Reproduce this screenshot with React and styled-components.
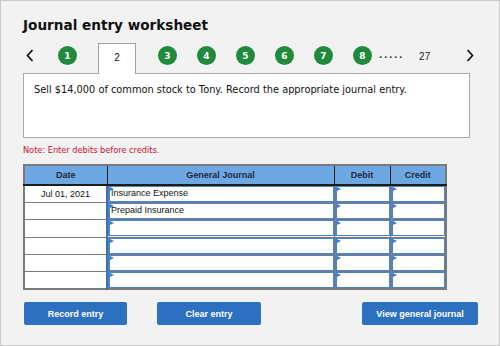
import React from 'react';
import styled, { createGlobalStyle } from 'styled-components';

const GlobalStyle = createGlobalStyle`
  html, body {
    margin: 0;
    padding: 0;
    background: #ffffff;
  }
`;

const Frame = styled.div`
  box-sizing: border-box;
  width: 500px;
  height: 346px;
  background: #f2f2f2;
  border: 1px solid #c9c9c9;
  padding: 14px 0 0 22px;
  font-family: 'DejaVu Sans', Verdana, sans-serif;
`;

const Title = styled.h1`
  margin: 0;
  font-size: 13.6px;
  line-height: 20px;
  font-weight: bold;
  color: #111;
`;

const TabRow = styled.div`
  display: flex;
  align-items: flex-start;
  height: 30px;
  margin-top: 8px;
  position: relative;
  z-index: 1;
`;

const Chevron = styled.svg`
  width: 8px;
  height: 13px;
  margin-left: ${(p) => p.$ml || 0}px;
  margin-top: 6px;
  flex-shrink: 0;
`;

const Step = styled.span`
  display: flex;
  align-items: center;
  justify-content: center;
  width: 19px;
  height: 19px;
  border-radius: 50%;
  background: #1f8a3c;
  color: #fff;
  font-size: 9px;
  font-weight: bold;
  margin-left: ${(p) => p.$ml}px;
  margin-top: 3px;
  flex-shrink: 0;
`;

const ActiveTab = styled.span`
  box-sizing: border-box;
  width: 38px;
  height: 31px;
  margin-left: ${(p) => p.$ml}px;
  background: #fff;
  border: 1px solid #a0a0a0;
  border-bottom: none;
  display: flex;
  justify-content: center;
  padding-top: 8px;
  font-family: 'Liberation Sans', Arial, sans-serif;
  font-size: 10px;
  color: #111;
`;

const Dots = styled.span`
  margin-left: 7px;
  margin-top: 7px;
  font-size: 9px;
  letter-spacing: 1.6px;
  font-weight: bold;
  color: #333;
`;

const Last = styled.span`
  margin-left: 15px;
  margin-top: 8px;
  font-family: 'Liberation Sans', Arial, sans-serif;
  font-size: 10px;
  color: #222;
`;

const Question = styled.div`
  box-sizing: border-box;
  width: 447px;
  height: 65px;
  background: #fff;
  border: 1px solid #ababab;
  padding: 10px 10px;
  font-size: 9.8px;
  color: #111;
`;

const Note = styled.p`
  margin: 7px 0 0 0;
  font-size: 8.2px;
  color: #c8102e;
`;

const Table = styled.table`
  margin-top: 9px;
  border-collapse: collapse;
  border: 2px solid #7a7a7a;
  font-family: 'Liberation Sans', Arial, sans-serif;
  font-size: 9px;
  table-layout: fixed;
  width: 422px;
`;

const Col = styled.col`
  width: ${(p) => p.$w}px;
`;

const Head = styled.th`
  background: #6ea8e3;
  height: 18px;
  padding: 0;
  font-weight: bold;
  color: #1b2a3c;
  border-left: 1px solid #1c1c1c;
  border-bottom: 2px solid #1c1c1c;
  &:first-child {
    border-left: none;
  }
`;

const Row = styled.tr`
  height: 17.3px;
`;

const DateCell = styled.td`
  background: #fff;
  text-align: center;
  padding: 0;
  border: 1px solid #7a7a7a;
  color: #111;
`;

const InputCell = styled.td`
  padding: 0;
  border: 1px solid #7a7a7a;
  border-left: ${(p) => (p.$wide ? 2 : 1)}px solid #3d6fa8;
`;

const Field = styled.div`
  position: relative;
  box-sizing: border-box;
  height: 16px;
  background: #fff;
  border: 1.5px solid #4a85cb;
  border-left-width: 2px;
  padding-left: 1px;
  line-height: 13px;
  color: #111;
  white-space: nowrap;
  overflow: hidden;
`;

const Marker = styled.span`
  position: absolute;
  left: 0;
  top: 0;
  width: 0;
  height: 0;
  border-top: 2px solid transparent;
  border-bottom: 2px solid transparent;
  border-left: 4px solid #3a7bd0;
`;

const Buttons = styled.div`
  display: flex;
  margin-top: 12px;
  margin-left: 1px;
`;

const Button = styled.button`
  box-sizing: border-box;
  width: ${(p) => p.$w}px;
  height: 23px;
  margin-left: ${(p) => p.$ml || 0}px;
  background: #2e70c0;
  border: none;
  border-radius: 2px;
  color: #fff;
  font-family: 'Liberation Sans', Arial, sans-serif;
  font-size: 9px;
  font-weight: bold;
  cursor: pointer;
`;

const rows = [
  { date: 'Jul 01, 2021', account: 'Insurance Expense' },
  { date: '', account: 'Prepaid Insurance' },
  { date: '', account: '' },
  { date: '', account: '' },
  { date: '', account: '' },
  { date: '', account: '' },
];

function Arrow({ dir, ml }) {
  const pts = dir === 'left' ? '6.5,1 1.5,6.5 6.5,12' : '1.5,1 6.5,6.5 1.5,12';
  return (
    <Chevron $ml={ml} viewBox="0 0 8 13">
      <polyline points={pts} fill="none" stroke="#111" strokeWidth="1.7" />
    </Chevron>
  );
}

function JournalWorksheet() {
  return (
    <Frame>
      <Title>Journal entry worksheet</Title>
      <TabRow>
        <Arrow dir="left" ml={3} />
        <Step $ml={24}>1</Step>
        <ActiveTab $ml={21}>2</ActiveTab>
        <Step $ml={22}>3</Step>
        <Step $ml={20}>4</Step>
        <Step $ml={20}>5</Step>
        <Step $ml={20}>6</Step>
        <Step $ml={20}>7</Step>
        <Step $ml={20}>8</Step>
        <Dots>.....</Dots>
        <Last>27</Last>
        <Arrow dir="right" ml={36} />
      </TabRow>
      <Question>
        Sell $14,000 of common stock to Tony. Record the appropriate journal entry.
      </Question>
      <Note>Note: Enter debits before credits.</Note>
      <Table>
        <colgroup>
          <Col $w={83} />
          <Col $w={227} />
          <Col $w={56} />
          <Col $w={56} />
        </colgroup>
        <thead>
          <tr>
            <Head>Date</Head>
            <Head>General Journal</Head>
            <Head>Debit</Head>
            <Head>Credit</Head>
          </tr>
        </thead>
        <tbody>
          {rows.map((r, i) => (
            <Row key={i}>
              <DateCell>{r.date}</DateCell>
              <InputCell $wide>
                <Field>
                  <Marker />
                  {r.account}
                </Field>
              </InputCell>
              <InputCell>
                <Field>
                  <Marker />
                </Field>
              </InputCell>
              <InputCell>
                <Field>
                  <Marker />
                </Field>
              </InputCell>
            </Row>
          ))}
        </tbody>
      </Table>
      <Buttons>
        <Button $w={103}>Record entry</Button>
        <Button $w={104} $ml={30}>Clear entry</Button>
        <Button $w={116} $ml={101}>View general journal</Button>
      </Buttons>
    </Frame>
  );
}

export default function App() {
  return (
    <>
      <GlobalStyle />
      <JournalWorksheet />
    </>
  );
}
